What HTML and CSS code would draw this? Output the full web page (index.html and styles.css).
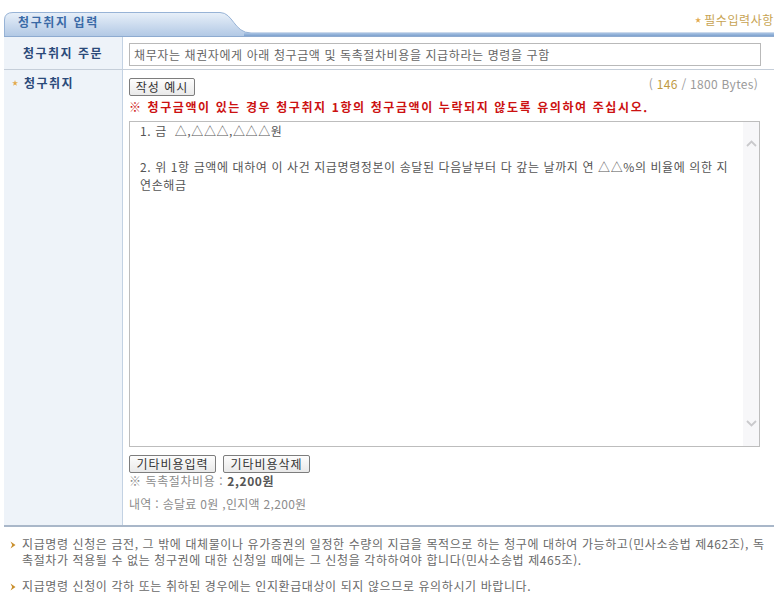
FILE: index.html
```html
<!DOCTYPE html>
<html lang="ko">
<head>
<meta charset="utf-8">
<title>청구취지 입력</title>
<link rel="stylesheet" href="styles.css">
</head>
<body>
<div class="page">
  <div class="head">
    <svg class="head-bg" width="770" height="26" viewBox="0 0 770 26">
      <defs>
        <linearGradient id="tabg" x1="0" y1="0" x2="0" y2="1">
          <stop offset="0" stop-color="#e8f0f9"/>
          <stop offset="1" stop-color="#b0c7e4"/>
        </linearGradient>
        <linearGradient id="barg" x1="0" y1="0" x2="0" y2="1">
          <stop offset="0" stop-color="#a9c4e4"/>
          <stop offset="1" stop-color="#6f95c6"/>
        </linearGradient>
      </defs>
      <path d="M0.5,26 L0.5,9 Q0.5,1.5 9,1.5 L216,1.5 C229,1.5 230,22 247,22 L770,22 L770,26 Z" fill="url(#tabg)"/>
      <path d="M0.5,26 L0.5,9 Q0.5,1.5 9,1.5 L216,1.5 C229,1.5 230,22 247,22 L770,22" fill="none" stroke="#97b3d6" stroke-width="1"/>
      <rect x="240" y="22" width="530" height="4" fill="url(#barg)"/>
      <rect x="0" y="25" width="770" height="1" fill="#8eabd0"/>
    </svg>
    <div class="head-content">
      <span class="tab-title">청구취지 입력</span>
      <span class="req"><svg class="star" width="6" height="6" viewBox="0 0 10 10"><path d="M5 0 L6.2 3.6 L10 3.6 L6.9 5.9 L8.1 9.6 L5 7.3 L1.9 9.6 L3.1 5.9 L0 3.6 L3.8 3.6 Z" fill="#e3a94a"/></svg>필수입력사항</span>
    </div>
  </div>

  <div class="form">
    <div class="row row-summary">
      <div class="label label-center">청구취지 주문</div>
      <div class="cell cell-summary">
        <div class="input">채무자는 채권자에게 아래 청구금액 및 독촉절차비용을 지급하라는 명령을 구함</div>
      </div>
    </div>
    <div class="row row-main">
      <div class="label label-main"><svg class="star star-lbl" width="6" height="6" viewBox="0 0 10 10"><path d="M5 0 L6.2 3.6 L10 3.6 L6.9 5.9 L8.1 9.6 L5 7.3 L1.9 9.6 L3.1 5.9 L0 3.6 L3.8 3.6 Z" fill="#e3a94a"/></svg>청구취지</div>
      <div class="cell cell-main">
        <div class="toolbar">
          <button class="btn btn-example" type="button">작성 예시</button>
          <span class="counter">( <span class="count-num">146</span> / 1800 Bytes)</span>
        </div>
        <p class="warn">※ 청구금액이 있는 경우 청구취지 1항의 청구금액이 누락되지 않도록 유의하여 주십시오.</p>
        <div class="textbox">
          <div class="text-content">1. 금&nbsp; △,△△△,△△△원<br><br>2. 위 1항 금액에 대하여 이 사건 지급명령정본이 송달된 다음날부터 다 갚는 날까지 연 △△%의 비율에 의한 지<br>연손해금</div>
          <div class="scrollbar">
            <svg width="11" height="7" viewBox="0 0 11 7"><path d="M1 6 L5.5 1.5 L10 6" fill="none" stroke="#c9c9cc" stroke-width="1.8"/></svg>
            <svg width="11" height="7" viewBox="0 0 11 7"><path d="M1 1 L5.5 5.5 L10 1" fill="none" stroke="#c9c9cc" stroke-width="1.8"/></svg>
          </div>
        </div>
        <div class="btn-row">
          <button class="btn" type="button">기타비용입력</button>
          <button class="btn" type="button">기타비용삭제</button>
        </div>
        <p class="cost">※ 독촉절차비용 : <b>2,200원</b></p>
        <p class="detail">내역 : 송달료 0원 ,인지액 2,200원</p>
      </div>
    </div>
  </div>

  <ul class="notes">
    <li><svg class="bullet" width="6" height="8" viewBox="0 0 6 8"><path d="M0.5 0.5 L5.5 4 L0.5 7.5 L2.2 4 Z" fill="#c98f2c"/></svg><span>지급명령 신청은 금전, 그 밖에 대체물이나 유가증권의 일정한 수량의 지급을 목적으로 하는 청구에 대하여 가능하고(민사소송법 제462조), 독<br>촉절차가 적용될 수 없는 청구권에 대한 신청일 때에는 그 신청을 각하하여야 합니다(민사소송법 제465조).</span></li>
    <li><svg class="bullet" width="6" height="8" viewBox="0 0 6 8"><path d="M0.5 0.5 L5.5 4 L0.5 7.5 L2.2 4 Z" fill="#c98f2c"/></svg><span>지급명령 신청이 각하 또는 취하된 경우에는 인지환급대상이 되지 않으므로 유의하시기 바랍니다.</span></li>
  </ul>
</div>
</body>
</html>
```

FILE: styles.css
```css
* { box-sizing: border-box; }

body {
  margin: 0;
  background: #ffffff;
  font-family: "Noto Sans CJK KR", "Noto Sans", "Liberation Sans", sans-serif;
  font-size: 12px;
  letter-spacing: 0.6px;
  color: #666666;
}

.page {
  width: 770px;
  margin-left: 4px;
}

/* header */
.head {
  display: grid;
  height: 37px;
}
.head-bg {
  grid-area: 1 / 1;
  align-self: end;
  display: block;
}
.head-content {
  grid-area: 1 / 1;
  display: flex;
  justify-content: space-between;
  align-items: flex-start;
  padding: 12px 0 0 14px;
}
.tab-title {
  margin-top: 2px;
  line-height: 16px;
  font-weight: bold;
  letter-spacing: 1.6px;
  color: #3a6aa6;
}
.req {
  display: flex;
  align-items: center;
  gap: 3px;
  line-height: 16px;
  color: #c7a352;
}
.star { display: block; }

/* form */
.row {
  display: grid;
  grid-template-columns: 119px 1fr;
}
.row-summary {
  border-bottom: 1px solid #c5ced9;
}
.row-main {
  border-bottom: 2px solid #a9b7c9;
}
.label {
  background: #eef3f9;
  border-right: 1px solid #c3d2e3;
  font-weight: bold;
  letter-spacing: 1.5px;
  color: #2b4a79;
  line-height: 16px;
}
.label-center {
  display: flex;
  align-items: center;
  justify-content: center;
  padding-bottom: 1px;
}
.label-main {
  display: flex;
  align-items: flex-start;
  padding: 5px 0 0 8px;
}
.star-lbl {
  margin: 5px 6px 0 0;
}

.cell {
  padding-left: 6px;
}
.cell-summary {
  padding-top: 6px;
  padding-bottom: 3px;
}
.input {
  width: 632px;
  height: 23px;
  border: 1px solid #b9b9b9;
  padding: 0 4px;
  line-height: 21px;
  color: #666666;
  white-space: nowrap;
}

.cell-main {
  padding-top: 8px;
  padding-bottom: 13px;
}
.toolbar {
  display: flex;
  justify-content: space-between;
  align-items: flex-start;
  width: 629px;
  height: 18px;
}
.btn {
  font-family: inherit;
  font-size: 12px;
  color: #333333;
  height: 18px;
  padding: 0;
  line-height: 16px;
  border: 1px solid #7d7d7d;
  border-radius: 2px;
  background: linear-gradient(#fdfdfd, #e9e9e9);
  letter-spacing: 1px;
}
.btn-example {
  width: 66px;
}
.counter {
  color: #9a9a9a;
  line-height: 16px;
  margin-top: -2px;
  letter-spacing: 0.3px;
}
.count-num { color: #c09a42; }

.warn {
  margin: 3px 0 0;
  line-height: 16px;
  font-weight: bold;
  letter-spacing: 1.6px;
  color: #cc1111;
  white-space: nowrap;
}

.textbox {
  display: flex;
  margin-top: 6px;
  width: 631px;
  height: 326px;
  border: 1px solid #bdbdbd;
}
.text-content {
  flex: 1;
  padding: 0 0 0 10px;
  line-height: 18px;
  color: #555555;
  white-space: nowrap;
}
.scrollbar {
  width: 16px;
  background: #f7f7f9;
  display: flex;
  flex-direction: column;
  justify-content: space-between;
  align-items: center;
  padding: 18px 0 19px;
}
.scrollbar svg { display: block; }

.btn-row {
  display: flex;
  gap: 7px;
  margin-top: 8px;
}
.btn-row .btn { width: 87px; }

.cost {
  margin: 0;
  line-height: 16px;
  color: #8c8c8c;
}
.cost b { color: #555555; }
.detail {
  margin: 7px 0 0;
  line-height: 16px;
  color: #8c8c8c;
  letter-spacing: 0.3px;
}

/* notes */
.notes {
  list-style: none;
  margin: 0;
  padding: 9px 0 0 6px;
}
.notes li {
  display: flex;
  align-items: flex-start;
  gap: 6px;
  line-height: 16px;
  color: #6a6a6a;
  margin-bottom: 10px;
  white-space: nowrap;
}
.bullet {
  display: block;
  margin-top: 5px;
  flex: none;
}
```
